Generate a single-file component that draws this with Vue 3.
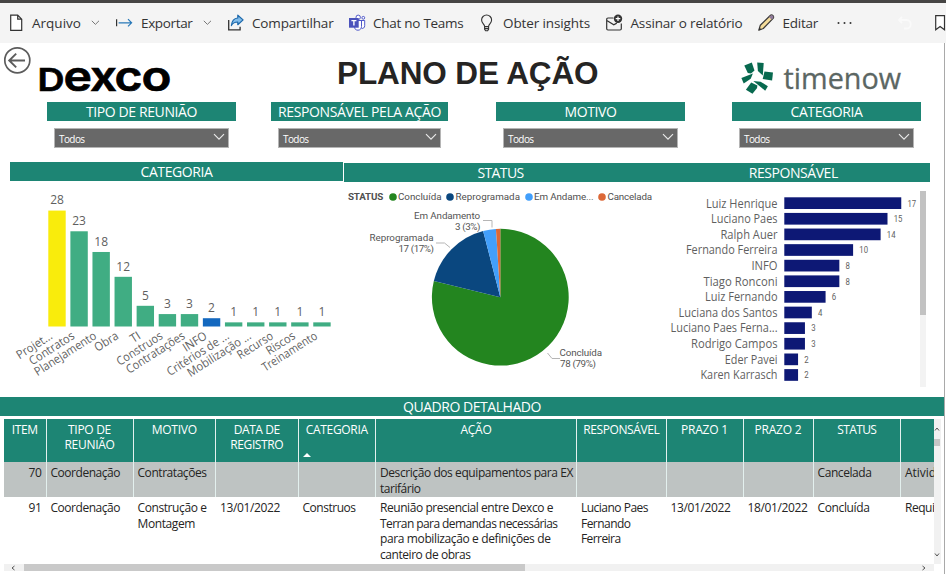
<script setup>
const pi = Math.PI

// Sets the tracking of a label so that it takes up the given width.
const vFit = {
  mounted(el, { value }) {
    if (!value) return
    const natural = el.getBoundingClientRect().width
    const count = el.textContent.length
    el.style.letterSpacing = (value - natural) / count + 'px'
  },
}

const slicers = [
  { title: 'TIPO DE REUNIÃO', w: 111, cls: 's1' },
  { title: 'RESPONSÁVEL PELA AÇÃO', w: 163, cls: 's2' },
  { title: 'MOTIVO', w: 52, cls: 's3' },
  { title: 'CATEGORIA', w: 72, cls: 's4' },
]

const categories = [
  ['Projet...', 28, 40], ['Contratos', 23, 51], ['Planejamento', 18, 71], ['Obra', 12, 26],
  ['TI', 5, 10], ['Construos', 3, 52], ['Contratações', 3, 67], ['INFO', 2, 26],
  ['Critérios de ...', 1, 71], ['Mobilização ...', 1, 73], ['Recurso', 1, 40],
  ['Riscos', 1, 32], ['Treinamento', 1, 63],
].map(([name, value, w], i) => ({
  name, value, w,
  x: 38.3 + i * 22.08,
  h: value * 4.14,
  fill: i === 0 ? '#f9ec0c' : i === 7 ? '#1368bf' : '#40ad83',
}))

const slices = [
  { value: 78, fill: '#23851f' },
  { value: 17, fill: '#0a477f' },
  { value: 3, fill: '#429ffb' },
  { value: 1, fill: '#dc6837' },
]
const total = 99
let start = 0
const pie = slices.map((s) => {
  const a0 = start
  const a1 = (start += (s.value / total) * 2 * pi)
  const p = (a) => `${156.3 + 68.4 * Math.sin(a)} ${115.2 - 68.4 * Math.cos(a)}`
  return {
    fill: s.fill,
    d: `M156.3 115.2L${p(a0)}A68.4 68.4 0 ${a1 - a0 > pi ? 1 : 0} 1 ${p(a1)}Z`,
  }
})

const legend = [
  ['Concluída', '#23851f', 43.5], ['Reprogramada', '#0a477f', 64.5],
  ['Em Andame...', '#429ffb', 59.5], ['Cancelada', '#dc6837', 44.5],
]

const people = [
  ['Luiz Henrique', 17, 71.5], ['Luciano Paes', 15, 66.5], ['Ralph Auer', 14, 57],
  ['Fernando Ferreira', 10, 91.5], ['INFO', 8, 26], ['Tiago Ronconi', 8, 74],
  ['Luiz Fernando', 6, 72.5], ['Luciana dos Santos', 4, 99], ['Luciano Paes Ferna...', 3, 107],
  ['Rodrigo Campos', 3, 86.5], ['Eder Pavei', 2, 52.7], ['Karen Karrasch', 2, 77],
].map(([name, value, w], i) => ({ name, value, w, y: 15.3 + i * 15.62 }))

const columns = [
  [['ITEM', 26]],
  [['TIPO DE', 43], ['REUNIÃO', 50]],
  [['MOTIVO', 45]],
  [['DATA DE', 46], ['REGISTRO', 53]],
  [['CATEGORIA', 62]],
  [['AÇÃO', 31]],
  [['RESPONSÁVEL', 76]],
  [['PRAZO 1', 47]],
  [['PRAZO 2', 47]],
  [['STATUS', 39]],
  [],
]

const rows = [
  [
    [['70', 13]], [['Coordenação', 69.5]], [['Contratações', 69]], [], [],
    [['Descrição dos equipamentos para EX', 193], ['tarifário', 40.5]],
    [], [], [], [['Cancelada', 54]], [['Ativid', 31]],
  ],
  [
    [['91', 13]], [['Coordenação', 69.5]], [['Construção e', 69], ['Montagem', 57.5]],
    [['13/01/2022', 60]], [['Construos', 53]],
    [
      ['Reunião presencial entre Dexco e', 173], ['Terran para demandas necessárias', 177.5],
      ['para mobilização e definições de', 170.5], ['canteiro de obras', 90.5],
    ],
    [['Luciano Paes', 67], ['Fernando', 49.5], ['Ferreira', 39.5]],
    [['13/01/2022', 60]], [['18/01/2022', 60]], [['Concluída', 52]], [['Requi', 29.5]],
  ],
]
</script>

<template>
  <div class="page">
    <nav class="toolbar">
      <div class="tool">
        <svg class="icon" width="16" height="18" viewBox="0 0 16 18"><path d="M.7 1.2h7l4 4v11.1H.7zM7.7 1.2v4h4" fill="#fff" stroke="#333" stroke-width="1.2" /></svg>
        <span v-fit="49">Arquivo</span>
        <svg class="chev" width="9" height="6" viewBox="0 0 9 6"><path d="M.8.8l3.6 3.6L8 .8" fill="none" stroke="#777" /></svg>
      </div>
      <div class="tool t25">
        <svg class="icon" width="17" height="18" viewBox="0 0 17 18"><path d="M.6 5.3v7" stroke="#333" stroke-width="1.2" /><path d="M2.6 8.8h13M12 5.2l3.6 3.6-3.6 3.6" fill="none" stroke="#2878b8" stroke-width="1.2" /></svg>
        <span v-fit="51.5">Exportar</span>
        <svg class="chev" width="9" height="6" viewBox="0 0 9 6"><path d="M.8.8l3.6 3.6L8 .8" fill="none" stroke="#777" /></svg>
      </div>
      <div class="tool t24">
        <svg class="icon" width="17" height="18" viewBox="0 0 17 18"><path d="M.7 6v9.800h11.400v-3" fill="none" stroke="#333" stroke-width="1.300" /><path d="M9.800 1.200l5.300 4.700-5.300 4.800V8C6.800 8 4.700 9 3.400 11.600 3.800 7.200 6 4.300 9.800 4z" fill="#83bdea" stroke="#1c68ab" stroke-width="1.200" stroke-linejoin="round" /></svg>
        <span v-fit="81.5">Compartilhar</span>
      </div>
      <div class="tool t24">
        <svg class="icon" width="17" height="18" viewBox="0 0 17 18"><circle cx="9.200" cy="3.300" r="2.200" fill="#fff" stroke="#5059c9" /><circle cx="14.300" cy="3.800" r="1.400" fill="#fff" stroke="#5059c9" /><path d="M9 6.500h6.700v5.200c0 2-1.500 3-3 2.700M6 6.500h6.500v6c0 2.300-1.500 3.700-3.500 3.700-1.800 0-3-.9-3.300-2.200z" fill="#fff" stroke="#5059c9" /><rect y="4" width="9.700" height="9.700" fill="#4b53bc" /><path d="M2.400 6.600h5M4.900 6.600v5" stroke="#fff" stroke-width="1.400" /></svg>
        <span v-fit="90.5">Chat no Teams</span>
      </div>
      <div class="tool t23">
        <svg class="icon" width="14" height="18" viewBox="0 0 14 18"><path d="M4.600 12.600c0-2.300-3-3.200-3-6.500A5 5 0 0 1 6.600 1a5 5 0 0 1 5 5.100c0 3.300-3 4.200-3 6.500zM4.600 12.400v3l1 1.400h2l1-1.400v-3M4.600 14.600h4" fill="none" stroke="#333" stroke-width="1.100" /></svg>
        <span v-fit="87">Obter insights</span>
      </div>
      <div class="tool t24">
        <svg class="icon" width="18" height="18" viewBox="0 0 18 18"><path d="M7.500 4H2C1.200 4 .7 4.500.7 5.200v9.600c0 .7.500 1.200 1.300 1.200h12c.8 0 1.300-.5 1.300-1.200V9.500M.8 6.500l7 4.200 3-1.600" fill="none" stroke="#333" stroke-width="1.200" /><circle cx="12" cy="4.700" r="4.200" fill="#333" /><path d="M9.700 4.700h4.600M12 2.400V7" stroke="#fff" stroke-width="1.200" /></svg>
        <span v-fit="112">Assinar o relatório</span>
      </div>
      <div class="tool t25">
        <svg class="icon" width="17" height="18" viewBox="0 0 17 18"><path d="M.8 16.200l1.500-4.900L12 1.700c1-1 2.200-.8 3 0s.9 2-.1 3L5.300 14.500z" fill="#f4dc9a" stroke="#3b3a39" stroke-width="1.200" stroke-linejoin="round" /><path d="M11 2.900l1.300-1.200c.8-.7 1.900-.7 2.600 0s.7 1.700 0 2.600l-1.200 1.400z" fill="#8f7a9a" /><path d="M.8 16.200l.8-2.600 1.800 1.800z" fill="#333" /></svg>
        <span v-fit="35.5">Editar</span>
      </div>
      <div class="tool"><svg width="15" height="4" viewBox="0 0 15 4"><circle cx="1.500" cy="2" r="1" fill="#333" /><circle cx="7.500" cy="2" r="1" fill="#333" /><circle cx="13.500" cy="2" r="1" fill="#333" /></svg></div>
      <div class="tool"><svg width="14" height="14" viewBox="0 0 14 14"><path d="M1 4h7.500a4 4 0 0 1 0 8.500H6M4 1L1 4l3 3" fill="none" stroke="#fafafa" stroke-width="1.800" /></svg></div>
      <div class="tool"><svg width="11" height="18" viewBox="0 0 11 18"><path d="M.7 1.700h8.800v14.100L5.100 12.600.7 15.800z" fill="#fff" stroke="#333" stroke-width="1.200" /></svg></div>
    </nav>

    <div class="report">
      <header class="brand">
        <svg class="back" width="28" height="28" viewBox="0 0 28 28"><circle cx="14.300" cy="14.300" r="12.500" fill="none" stroke="#5c5c5c" stroke-width="1.700" /><path d="M22 14.500H6.500M13.200 7.600l-7 6.900 7 6.900" fill="none" stroke="#5c5c5c" stroke-width="1.900" /></svg>
        <svg class="dexco" width="136" height="44" viewBox="-2 -6 136 44">
          <g font-family="Inter, sans-serif" font-weight="600" fill="#000" stroke="#000" stroke-width=".7">
            <text x="-1.500" y="30.500" font-size="31.500" textLength="27" lengthAdjust="spacingAndGlyphs">D</text>
            <text x="24.500" y="30.500" font-size="41" textLength="28.500" lengthAdjust="spacingAndGlyphs">e</text>
            <text x="51" y="30.500" font-size="41" textLength="27" lengthAdjust="spacingAndGlyphs">x</text>
            <text x="75.500" y="30.500" font-size="41" textLength="28" lengthAdjust="spacingAndGlyphs">c</text>
            <text x="102.500" y="30.500" font-size="41" textLength="30" lengthAdjust="spacingAndGlyphs">o</text>
          </g>
        </svg>
        <h1 class="title"><span v-fit="261.5">PLANO DE AÇÃO</span></h1>
        <svg class="timenow" width="164" height="40" viewBox="0 0 164 40">
          <g fill="#08694f">
            <path d="M4.300 7.500l7.500-2.900 2.700 8-3.500 3-3.200-.7z" />
            <path d="M17.200 4.600l6.500.5-.9 12.300-4.900-4.500z" />
            <path d="M24.500 13.600l8.500 1-.9 8-9.400-1.500z" />
            <path d="M1.400 19.900l11.500-4.400-2.200 5.300-7 4.700z" />
            <path d="M5.900 31.700l5.300-7.200 6.200 3-.3 2.500-4.600 5.700z" />
            <path d="M13.300 23l7.300.7 7.300 4.500-2.700 4.500z" />
          </g>
          <text x="43.500" y="31" font-family="'Open Sans', sans-serif" font-size="29.500" fill="#5b6663" stroke="#5b6663" stroke-width=".3" textLength="117.500" lengthAdjust="spacingAndGlyphs">timenow</text>
        </svg>
      </header>

      <section class="slicers">
        <div v-for="s in slicers" :key="s.title" class="slicer" :class="s.cls">
          <h2 class="band"><span v-fit="s.w">{{ s.title }}</span></h2>
          <div class="select">
            <span v-fit="25.5">Todos</span>
            <svg width="12" height="8" viewBox="0 0 12 8"><path d="M1 1.200l5 5 5-5" fill="none" stroke="#e8e8e8" stroke-width="1.200" /></svg>
          </div>
        </div>
      </section>

      <section class="charts">
        <div class="panel raised">
          <h2 class="band"><span v-fit="72">CATEGORIA</span></h2>
          <svg width="333" height="205" viewBox="0 0 333 205" class="chart">
            <g v-for="c in categories" :key="c.name">
              <rect :x="c.x" :y="145.500 - c.h" width="17.400" :height="c.h" :fill="c.fill" />
              <text :x="c.x + 8.700" :y="139.200 - c.h" text-anchor="middle">{{ c.value }}</text>
              <text :transform="`translate(${c.x + 5} ${157}) rotate(-32.500)`" text-anchor="end" :textLength="c.w" lengthAdjust="spacingAndGlyphs">{{ c.name }}</text>
            </g>
          </svg>
        </div>

        <div class="panel">
          <h2 class="band"><span v-fit="46">STATUS</span></h2>
          <div class="legend">
            <b v-fit="35">STATUS</b>
            <span v-for="l in legend" :key="l[0]" class="key">
              <svg width="8" height="8" viewBox="0 0 8 8"><circle cx="4" cy="4" r="3.800" :fill="l[1]" /></svg>
              <span v-fit="l[2]">{{ l[0] }}</span>
            </span>
          </div>
          <svg width="313" height="182" viewBox="0 24 313 182" class="chart pie">
            <path v-for="p in pie" :key="p.fill" :d="p.d" :fill="p.fill" />
            <path d="M139 38.500h9v7M92 61h8.500l5.500 4.500M203.500 171l4.500 5.500h8" fill="none" stroke="#b5b5b5" />
            <text x="70" y="36.500" textLength="66">Em Andamento</text>
            <text x="111" y="47.500" textLength="25.500">3 (3%)</text>
            <text x="25.500" y="58.500" textLength="64">Reprogramada</text>
            <text x="54.500" y="69.500" textLength="35.500">17 (17%)</text>
            <text x="215.500" y="173.500" textLength="42.500">Concluída</text>
            <text x="216" y="184.500" textLength="36">78 (79%)</text>
          </svg>
        </div>

        <div class="panel">
          <h2 class="band"><span v-fit="89">RESPONSÁVEL</span></h2>
          <div class="people">
            <svg width="262" height="205" viewBox="0 0 262 205" class="chart">
              <g v-for="p in people" :key="p.name">
                <text x="120.500" :y="p.y + 10.200" text-anchor="end" :textLength="p.w" lengthAdjust="spacingAndGlyphs">{{ p.name }}</text>
                <rect x="127.300" :y="p.y" :width="p.value * 6.880" height="11.700" fill="#0d1875" />
                <text class="num" :x="133.500 + p.value * 6.880" :y="p.y + 9.200" :textLength="p.value > 9 ? 8.700 : 4.400" lengthAdjust="spacingAndGlyphs">{{ p.value }}</text>
              </g>
            </svg>
            <div class="vbar"><i></i></div>
          </div>
        </div>
      </section>

      <section class="detail">
        <h2 class="band"><span v-fit="138">QUADRO DETALHADO</span></h2>
        <div class="tablewrap">
          <div class="table">
            <div class="tr head">
              <div v-for="(c, i) in columns" :key="i" class="cell">
                <div v-for="l in c" :key="l[0]"><span v-fit="l[1]">{{ l[0] }}</span></div>
                <svg v-if="i === 4" class="sort" width="8" height="4" viewBox="0 0 8 4"><path d="M0 4l4-4 4 4z" fill="#fff" /></svg>
              </div>
            </div>
            <div v-for="(r, n) in rows" :key="n" class="tr" :class="n ? 'plain' : 'shade'">
              <div v-for="(c, i) in r" :key="i" class="cell">
                <div v-for="l in c" :key="l[0]"><span v-fit="l[1]">{{ l[0] }}</span></div>
              </div>
            </div>
          </div>
          <div class="tscroll">
            <svg width="6" height="4" viewBox="0 0 6 4"><path d="M1 3.500l2-2.500 2 2.500" fill="none" stroke="#555" /></svg>
            <i></i>
            <svg width="6" height="4" viewBox="0 0 6 4"><path d="M1 .5L3 3 5 .5" fill="none" stroke="#555" /></svg>
          </div>
        </div>
        <div class="hscroll">
          <svg width="4" height="6" viewBox="0 0 4 6"><path d="M3.500 1L1 3l2.500 2" fill="none" stroke="#555" /></svg>
          <i></i>
          <svg width="4" height="6" viewBox="0 0 4 6"><path d="M.5 1L3 3 .5 5" fill="none" stroke="#555" /></svg>
        </div>
      </section>
    </div>
  </div>
</template>

<style>
body { background: #fff; overflow: hidden; }
</style>

<style scoped>
* { box-sizing: border-box; }
.page { width: 946px; height: 574px; overflow: hidden; font-family: "Open Sans", "Noto Sans", sans-serif; background: #fff; }
span, b { white-space: nowrap; }
svg { display: block; flex: none; }
.toolbar { display: grid; grid-template-columns: 106px 112px 121px 131px 125.500px 152px 79px 61px 37px 11px; height: 43px; padding-left: 10px; border-top: 3px solid #464544; background: #f4f4f4; color: #333; font-size: 13.500px; }
.tool { display: flex; align-items: center; white-space: nowrap; }
.tool .icon { margin-right: 6px; }
.tool.t25 .icon { margin-right: 8px; }
.tool.t24 .icon { margin-right: 7px; }
.tool.t23 .icon { margin-right: 9px; }
.chev { margin-left: 10px; }
.report { width: 945px; height: 531px; border-right: 1px solid #a9a9a9; }
.brand { display: flex; height: 59px; padding-left: 3px; }
.back { margin-top: 3px; }
.dexco { margin: 11px 0 0 6px; }
.title { margin: 9.500px 0 0 164px; width: 264px; height: 40px; font: 700 31.500px/40px "Liberation Sans", Arial, sans-serif; color: #252423; }
.timenow { margin: 15px 0 0 139px; }
.slicers { display: flex; height: 60px; margin-left: 47px; }
.slicer { width: 189px; }
.s2 { width: 177px; margin-left: 35px; }
.s3 { margin-left: 48px; }
.s4 { margin-left: 47px; }
.band { display: flex; justify-content: center; align-items: center; height: 18.500px; margin: 0; padding-top: 1.500px; background: #1d8574; color: #fff; font-size: 14px; font-weight: 400; line-height: 18px; }
.select { display: flex; align-items: center; justify-content: space-between; height: 19.500px; margin: 7.500px 7px 0; padding: 2px 3px 0 4px; border: 1px solid #b5b5b5; background: #686868; color: #fff; font: 10px "Open Sans", sans-serif; }
.s2 .select { margin-right: 7px; }
.select svg { margin-top: -3px; }
.charts { display: grid; grid-template-columns: 334px 313px 272.500px; height: 235px; padding-left: 10px; }
.panel { padding-top: 1px; }
.panel.raised { padding-top: 0; }
.raised .band { margin-right: 1px; }
.chart { font-family: "Open Sans", sans-serif; font-size: 12px; fill: #5f5f5f; }
.pie { font-family: Roboto, sans-serif; font-size: 9.800px; fill: #555; }
.chart .num { font-family: Roboto, sans-serif; font-size: 8.500px; }
.legend { display: flex; align-items: center; height: 24px; padding: 6px 0 0 4px; font: 9.800px Roboto, sans-serif; color: #505050; }
.legend b { margin-right: 5.500px; }
.key { display: flex; align-items: center; gap: 1.500px; margin-right: 4.500px; }
.people { display: flex; }
.vbar { width: 6px; height: 196px; margin-top: 9.500px; margin-left: 1px; background: #f3f3f3; }
.vbar i { display: block; height: 124px; background: #c2c2c2; }
.tablewrap { display: flex; height: 145px; margin: 3.500px 0 0 4px; }
.table { width: 930px; overflow: hidden; color: #252423; font-size: 12px; line-height: 15.500px; }
.tr { display: grid; grid-template-columns: 42.500px 87px 82.500px 82.500px 77.500px 201px 89.500px 77px 70px 87.500px 100px; }
.cell { padding: 3px 4px 0; border-right: 1px solid #e3f0ee; overflow: hidden; white-space: nowrap; }
.cell:first-child { text-align: right; }
.head { height: 43px; background: #1d8574; color: #fff; line-height: 15px; }
.head .cell { text-align: center; }
.sort { margin-top: 16px; }
.shade { height: 35px; background: #bec3c2; }
.plain { height: 67px; }
.plain .cell { border-color: transparent; }
.tscroll { display: flex; flex-direction: column; align-items: center; width: 6.500px; padding: 8px 0 7px; background: #f1f1f1; }
.tscroll i { width: 6px; height: 7px; margin: 8px 0 auto; background: #c6c6c6; }
.hscroll { display: flex; align-items: center; width: 930px; height: 7px; margin-left: 4px; padding: 0 8px 0 7px; background: #f1f1f1; }
.hscroll i { width: 501.500px; height: 7px; margin: 0 auto 0 8.500px; background: #c9c9c9; }
</style>
